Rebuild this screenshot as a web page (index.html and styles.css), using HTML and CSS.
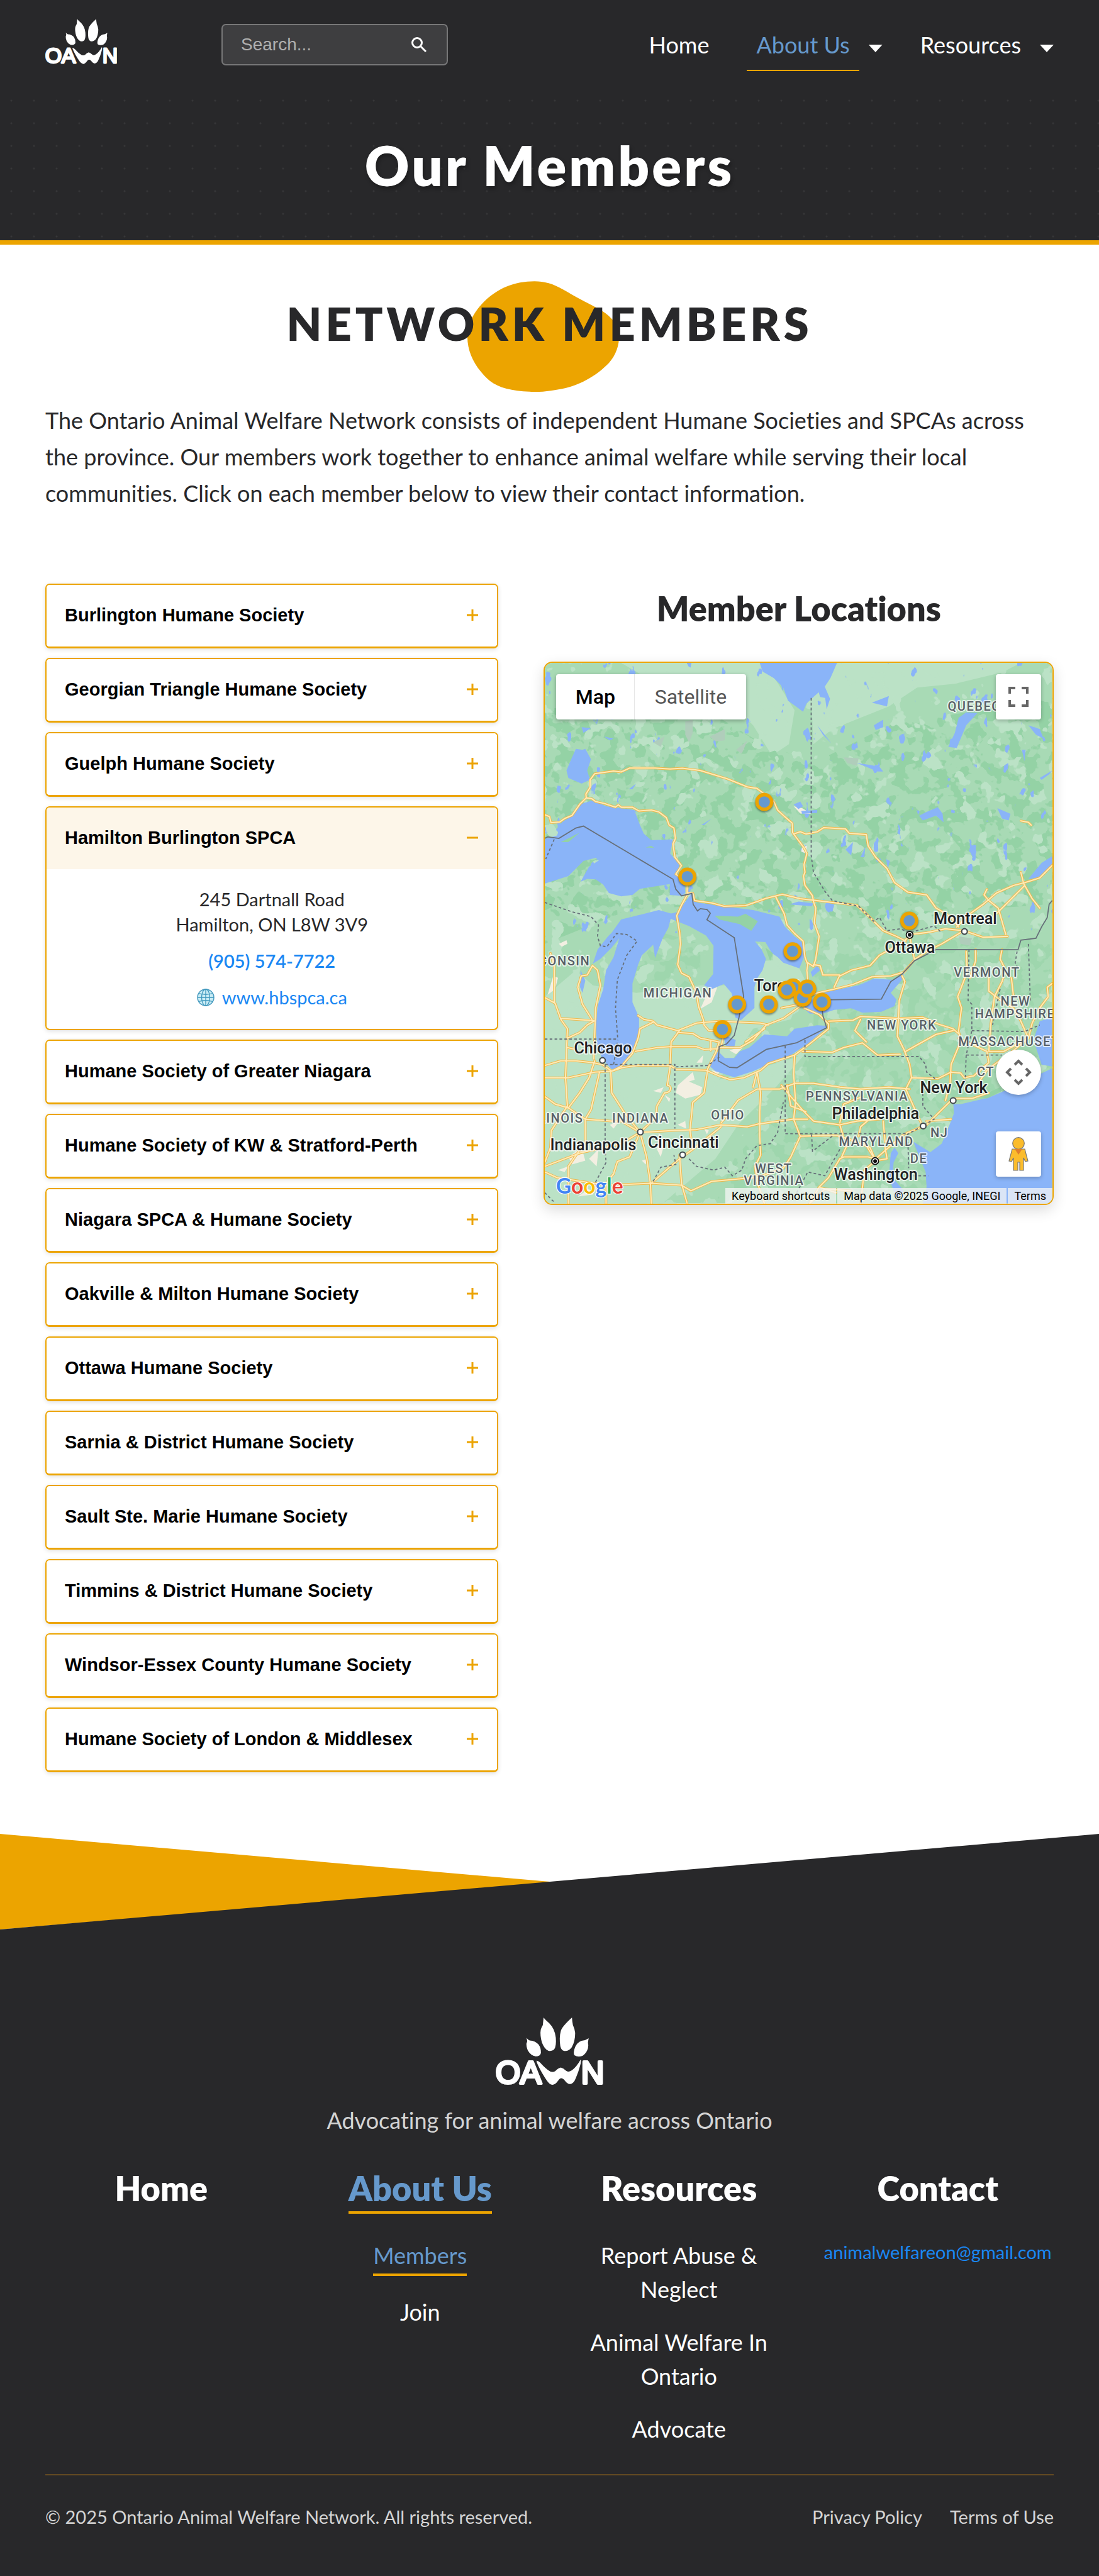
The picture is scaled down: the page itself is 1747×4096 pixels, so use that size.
FILE: index.html
```html
<!DOCTYPE html>
<html lang="en">
<head>
<meta charset="utf-8">
<meta name="viewport" content="width=device-width, initial-scale=1">
<title>Our Members | Ontario Animal Welfare Network</title>
<link rel="stylesheet" href="styles.css">
</head>
<body>
<svg class="sprite" aria-hidden="true">
  <symbol id="oawn" viewBox="36 28 571 358">
    <g fill="#fff">
      <path d="M290 28Q300 42 320 58Q350 88 355 135Q359 180 346 198Q334 209 316 205Q294 196 281 160Q270 120 275 92Q279 80 286 68Z"/>
      <path d="M441 28Q442 48 446 68Q456 88 458 110Q458 155 440 186Q424 208 401 206Q384 203 379 180Q372 135 382 98Q390 74 441 28Z"/>
      <path d="M199 136Q206 146 216 150Q245 151 263 171Q277 190 276 216Q272 235 248 235Q222 231 206 203Q197 180 199 165Q203 158 203 153Z"/>
      <path d="M530 138Q527 152 526 162Q530 175 526 192Q518 218 497 232Q472 241 454 229Q446 214 458 184Q470 160 492 152Q512 150 530 138Z"/>
      <path d="M253 257Q262 258 272 268Q300 300 325 315Q340 320 352 313Q368 297 382 294Q396 298 408 310Q420 322 440 309Q466 290 487 251Q491 264 484 285Q474 325 455 364Q443 382 430 382Q416 381 403 363Q393 351 384 351Q376 351 366 366Q351 386 337 386Q322 384 308 364Q272 312 253 265Z"/>
      <g class="logo-letters"><text x="35" y="379">O</text><text x="165" y="379">A</text><text x="490" y="379">N</text></g>
    </g>
  </symbol>
  <symbol id="plus" viewBox="0 0 18 18"><path d="M0 9H18M9 0V18" stroke="#eca400" stroke-width="3"/></symbol>
  <symbol id="minus" viewBox="0 0 18 18"><path d="M0 9H18" stroke="#eca400" stroke-width="3"/></symbol>
</svg>

<header class="site-header">
  <a class="logo-link" href="#" aria-label="OAWN home"><svg class="logo"><use href="#oawn"/></svg></a>
  <form class="search" role="search">
    <input type="search" aria-label="Search" placeholder="Search...">
    <button type="button" aria-label="Submit search">
      <svg width="24" height="24" viewBox="0 0 24 24" fill="none" stroke="#fff" stroke-width="3"><circle cx="9" cy="9" r="7.500"/><path d="M14.500 14.500L23 23"/></svg>
    </button>
  </form>
  <nav class="nav">
    <div class="nav-item"><a href="#">Home</a></div>
    <div class="nav-item"><a class="active" href="#">About Us</a><button class="caret" aria-label="Open About Us menu"></button></div>
    <div class="nav-item"><a href="#">Resources</a><button class="caret" aria-label="Open Resources menu"></button></div>
  </nav>
</header>

<section class="hero"><h1>Our Members</h1></section>

<main>
  <div class="title">
    <svg class="blob" viewBox="0 0 270 196" aria-hidden="true"><path fill="#eca400" d="M119 0C136 0 152 4 170 15C184 23 194 29 208 36C236 50 248 57 257 68C266 78 270 88 269 101C268 120 260 137 246 150C222 173 190 189 155 193C138 196 122 197 110 196C80 195 55 189 40 177C18 158 0 130 0 99C0 75 12 55 26 40C52 12 84 0 119 0Z"/></svg>
    <h2>Network Members</h2>
  </div>
  <p class="intro">The Ontario Animal Welfare Network consists of independent Humane Societies and SPCAs across the province. Our members work together to enhance animal welfare while serving their local communities. Click on each member below to view their contact information.</p>

  <div class="columns">
    <div class="members">
      <article class="member"><button>Burlington Humane Society<svg><use href="#plus"/></svg></button></article>
      <article class="member"><button>Georgian Triangle Humane Society<svg><use href="#plus"/></svg></button></article>
      <article class="member"><button>Guelph Humane Society<svg><use href="#plus"/></svg></button></article>
      <article class="member open">
        <button aria-expanded="true">Hamilton Burlington SPCA<svg><use href="#minus"/></svg></button>
        <div class="details">
          <address>245 Dartnall Road<br>Hamilton, ON L8W 3V9</address>
          <a class="phone" href="tel:9055747722">(905) 574-7722</a>
          <a class="site" href="#">
            <svg width="28" height="28" viewBox="0 0 28 28" fill="none"><circle cx="14" cy="14" r="13" fill="#c9ecf5" stroke="#4a9cc0" stroke-width="1.500"/><g stroke="#3f98bd" stroke-width="1.300"><ellipse cx="14" cy="14" rx="6.500" ry="13"/><path d="M14 1V27M1 14H27M3 7.500Q14 11 25 7.500M3 20.500Q14 17 25 20.500"/></g></svg>
            www.hbspca.ca</a>
        </div>
      </article>
      <article class="member"><button>Humane Society of Greater Niagara<svg><use href="#plus"/></svg></button></article>
      <article class="member"><button>Humane Society of KW &amp; Stratford-Perth<svg><use href="#plus"/></svg></button></article>
      <article class="member"><button>Niagara SPCA &amp; Humane Society<svg><use href="#plus"/></svg></button></article>
      <article class="member"><button>Oakville &amp; Milton Humane Society<svg><use href="#plus"/></svg></button></article>
      <article class="member"><button>Ottawa Humane Society<svg><use href="#plus"/></svg></button></article>
      <article class="member"><button>Sarnia &amp; District Humane Society<svg><use href="#plus"/></svg></button></article>
      <article class="member"><button>Sault Ste. Marie Humane Society<svg><use href="#plus"/></svg></button></article>
      <article class="member"><button>Timmins &amp; District Humane Society<svg><use href="#plus"/></svg></button></article>
      <article class="member"><button>Windsor-Essex County Humane Society<svg><use href="#plus"/></svg></button></article>
      <article class="member"><button>Humane Society of London &amp; Middlesex<svg><use href="#plus"/></svg></button></article>
    </div>

    <section class="locations">
      <h3>Member Locations</h3>
      <div class="map">
        <svg class="map-canvas" viewBox="75 69 2691 2868" role="img" aria-label="Map of member locations across Ontario">
          <defs>
            <filter id="forest" x="0" y="0" width="1" height="1" color-interpolation-filters="sRGB">
              <feTurbulence type="fractalNoise" baseFrequency=".013" numOctaves="3" seed="7"/>
              <feColorMatrix values="0 0 0 0 0  0 0 0 0 0  0 0 0 0 0  30 0 0 0 -15.400"/>
              <feComposite in="SourceGraphic" operator="in"/>
            </filter>
            <filter id="meadow" x="0" y="0" width="1" height="1" color-interpolation-filters="sRGB">
              <feTurbulence type="fractalNoise" baseFrequency=".011" numOctaves="3" seed="21"/>
              <feColorMatrix values="0 0 0 0 0  0 0 0 0 0  0 0 0 0 0  0 30 0 0 -18.500"/>
              <feComposite in="SourceGraphic" operator="in"/>
            </filter>
            <filter id="ponds" x="0" y="0" width="1" height="1" color-interpolation-filters="sRGB">
              <feTurbulence type="fractalNoise" baseFrequency=".016 .010" numOctaves="3" seed="3"/>
              <feColorMatrix values="0 0 0 0 0  0 0 0 0 0  0 0 0 0 0  0 0 30 0 -21.800"/>
              <feComposite in="SourceGraphic" operator="in"/>
            </filter>
            <g id="roads" fill="none" stroke-linejoin="round" stroke-linecap="round">
              <path d="M75 875L100 885L108 917L155 913L180 895L220 878L260 820L295 785L293 765L315 730L315 690L340 657L440 643L480 648L525 627L660 627L740 632L805 628L900 640L1040 683L1150 727L1200 735L1240 765L1290 805L1310 850L1350 887L1388 920L1390 970L1450 1050L1465 1080L1450 1140L1455 1180L1447 1200L1455 1250L1495 1305L1500 1335"/>
              <path d="M295 785L325 790L345 805L390 815L450 835L465 822L480 835L540 835L575 855L640 850L680 860L720 890L735 930L760 945L768 1000L755 1030L765 1100L800 1145L770 1190L790 1205L830 1210L830 1300L800 1355L775 1410L790 1500L795 1560L780 1670L800 1715L840 1735L880 1820L890 1890L915 1960L920 1990L945 2020L985 2020"/>
              <path d="M835 1290L860 1290L870 1330L960 1343L1025 1360L1140 1357L1250 1318L1335 1297L1430 1320L1500 1328L1600 1340L1730 1355L1775 1395L1815 1435L1870 1490L1940 1520L1990 1545"/>
              <path d="M1300 1310L1345 1400L1360 1460L1400 1505L1445 1545L1455 1630L1470 1670L1465 1700L1470 1750L1460 1850L1430 1890M1500 1335L1512 1370L1505 1450L1530 1520L1512 1640L1500 1680L1470 1660M1500 1670L1535 1675L1550 1725L1640 1725L1610 1790"/>
              <path d="M1400 975L1430 965L1460 977L1520 965L1555 943L1670 950L1690 973L1780 980L1790 1040L1830 1100L1890 1160L1930 1235L2000 1285L2100 1300L2150 1370L2220 1410L2270 1470"/>
              <path d="M2260 1470L2330 1400L2400 1350L2470 1290L2560 1250L2620 1235L2700 1210L2770 1140M2470 1400L2560 1310L2620 1250M2600 1180L2615 1240L2660 1320L2700 1370M2420 1270L2405 1300L2430 1330L2480 1370L2520 1510M2600 907L2640 915L2655 930"/>
              <path d="M1470 1840L1520 1820L1610 1800L1710 1775L1810 1735L1910 1730L1980 1710L2040 1640L2100 1600L2180 1560L2280 1500M2010 1520L1960 1560L1850 1620L1800 1675L1700 1700L1640 1730M2010 1520L2035 1640M2010 1510L2100 1500L2200 1480L2300 1490L2400 1525L2530 1520"/>
              <path d="M1430 1890L1340 1955L1250 1990L1180 2070L1110 2110L1000 2110M1450 1900L1530 1935L1580 1985M1330 1900L1430 1880M1240 2010L1140 2080M1020 2060L1010 2110"/>
              <path d="M75 1845L130 1875L160 1960L195 2010L185 2270L195 2420M105 1610L125 1680L125 1870M160 1955L335 1967M335 2170L345 1900L370 1780L355 1700L328 1675L300 1725L268 1730L250 1790L275 1880L325 1960M195 2060L260 2030L300 1990L335 1970M195 2110L240 2120"/>
              <path d="M75 2205L160 2180L240 2180L330 2190L380 2200L430 2235L490 2215L570 2205L740 2205L770 2225L930 2230L1000 2260L1060 2280L1130 2270L1220 2230L1260 2195L1400 2150L1480 2090L1580 2010L1580 1985M75 2270L200 2270L340 2240L430 2235L480 2210L540 2140L570 2060L580 2010L650 1975"/>
              <path d="M570 1940L600 1960L650 1970L670 1990L780 2020L880 1980L1000 1970L1110 1975L1220 1980L1260 1990M555 2130L670 2110L740 2105L880 2105L920 2120L1000 2115M780 2030L860 2035L900 2060L1000 2080L985 2130L940 2220L920 2350L860 2400L845 2550L860 2650M955 2070L955 2125"/>
              <path d="M425 2235L430 2350L500 2460L580 2560M740 2210L745 2080L790 2020M740 2210L725 2310C750 2310 750 2350 710 2350L670 2420L665 2480L580 2560M75 2370L130 2410L200 2430L290 2490L430 2500L480 2500L580 2560L760 2550L880 2545L1010 2520L1150 2530L1210 2515L1390 2490L1470 2490"/>
              <path d="M365 2240L345 2330L320 2440L290 2490L290 2610L200 2740L200 2937M580 2560L480 2620L260 2670L75 2740M195 2420L110 2550L105 2640L75 2720M200 2430L260 2350L310 2270L340 2180M75 2770L140 2800L400 2840L640 2830L800 2840L850 2870L960 2820L1180 2800M580 2560L525 2690L460 2715L440 2780L400 2830L400 2937M580 2560L615 2690L635 2830L640 2937"/>
              <path d="M790 2680L800 2830L830 2937M640 2830L720 2760L790 2700L860 2650L1010 2530M1010 2510L1100 2390L1200 2330L1320 2330L1400 2300L1500 2300L1640 2320L1750 2330L1900 2320L2010 2330M1200 2240L1180 2320M1200 2240L1220 2350L1215 2450L1215 2580L1220 2680L1190 2740L1200 2820L1240 2937"/>
              <path d="M1400 2150L1395 2250L1405 2400L1395 2490L1430 2580L1380 2690L1340 2750L1200 2800M1330 2310L1380 2370L1450 2450L1500 2500L1640 2520L1730 2500L1850 2490M1360 2310L1380 2420L1460 2450M1430 2580L1620 2575L1700 2600L1800 2640L1830 2710M1640 2520L1660 2590M1640 2510L1660 2410L1760 2370M1870 2500L1880 2610M1740 2580L1750 2530L1820 2470"/>
              <path d="M1580 1970L1710 1965L1750 1945L1950 1955L2080 1950L2160 1985L2240 2010L2275 2040M1970 1730L1985 1760L1955 1860L1950 1960L1945 2050L1980 2120L2010 2200L2020 2270L1990 2330L2030 2420L2080 2530M2310 1600L2315 1710L2265 1840L2285 1900L2270 2020L2280 2080L2230 2200L2225 2300L2200 2390M2360 1590L2360 1650L2330 1740"/>
              <path d="M1990 2130L2060 2090L2150 2040L2240 2020M1440 2130L1600 2135L1660 2110L1760 2085L1840 2150L1960 2145M1780 2080L1720 2020L1750 1960M2020 2270L2160 2275L2230 2240L2280 2245L2300 2270L2350 2260L2430 2190L2420 2130L2270 2060M2430 2130L2510 2130L2640 2060M2500 1590L2490 1640L2520 1700L2500 1760L2460 1840L2440 1990L2430 2130"/>
              <path d="M2430 1740L2430 1810L2480 1850L2560 1900L2600 1970L2640 2060M2550 1740L2560 1830M2766 1770L2740 1790L2745 1840L2700 1900L2660 1980L2640 2060L2580 2110L2420 2230L2380 2290M2230 2390L2160 2460L2100 2520L1980 2570L1830 2700L1790 2690L1660 2690L1640 2700M2240 2380L2340 2380L2430 2350M2100 2500L2230 2490"/>
              <path d="M1830 2710L1780 2630M1830 2710L1770 2760L1750 2937M1640 2700L1580 2800L1530 2850L1480 2937M1690 2600L1650 2690M1880 2640L1890 2700L1830 2710M1530 2850L1620 2880M1480 2937L1560 2860L1700 2870"/>
            </g>
          </defs>

          <rect x="75" y="69" width="2691" height="2868" fill="#a8dab5"/>
          <path fill="#bbe2c6" d="M480 69H1215L1300 160L1400 320L1370 500L1280 560L1180 400L1080 300L950 200L800 150L600 140ZM1480 69H2600L2500 120L2250 180L2050 200L1900 300L1600 420L1500 500Z"/>
          <path fill="#bbe2c6" d="M75 1840L240 1700L330 1780L560 1820L900 1780L1100 1780L1240 1650L1400 1640L1460 1760L1380 1960L1180 2010L1000 2280L1450 2150L1300 2320L1100 2520L980 2700L700 2937H75Z"/>
          <path fill="#94d2a5" filter="url(#forest)" d="M75 320L700 200L900 300L1200 480L1500 600L1900 400L2500 300L2766 250V1350L2300 1380L2000 1440L1700 1420L1340 1400L1000 1350L520 1380L75 1560Z"/>
          <path fill="#94d2a5" opacity=".45" filter="url(#forest)" d="M560 1680L700 1500L900 1560L900 1760L760 1830L560 1800ZM1500 1500H2766V2500L1900 2937H980L1080 2700L1340 2400L1500 2100Z"/>
          <path fill="#bbe2c6" filter="url(#meadow)" d="M75 69H2766V2937H75Z"/>
          <path fill="#8ab4f8" filter="url(#ponds)" d="M75 69H2766V1500H75Z"/>
          <g fill="#b0cdbb"><path d="M820 380L860 370L860 440L840 490L820 450ZM950 460L1030 420L1030 480L980 485ZM1090 530L1150 480L1120 550ZM650 490L710 460L690 515ZM1660 570L1740 575L1730 615L1680 600ZM2270 1520L2340 1530L2330 1570L2280 1560Z"/></g>
          <g fill="#f3efe2">
            <path d="M150 1560L190 1540L195 1560L165 1575ZM120 1730L145 1740L130 1800L90 1830ZM960 1800L990 1790L960 1870L900 1905L925 1850ZM650 2340L705 2320L690 2350ZM780 2310L860 2240L870 2280L840 2290L910 2320L900 2360L820 2380L770 2350ZM880 2190L915 2150L910 2190ZM960 2230L1000 2240L990 2260ZM710 2360L740 2380L735 2400ZM1055 2125L1140 2095L1090 2145Z"/>
            <path d="M200 2690L270 2640L290 2710L220 2730ZM310 2700L360 2650L350 2740ZM590 2710L620 2700L610 2730ZM680 2560L710 2620L690 2690L670 2650ZM780 2520L820 2500L825 2540ZM920 2540L945 2550L935 2570ZM250 2900L310 2860L330 2890ZM420 2520L470 2500L440 2540ZM145 2760L200 2740L180 2770ZM1440 1045L1465 1040L1460 1080L1435 1070ZM1395 830L1440 840L1490 870L1430 868Z"/>
          </g>
          <g fill="#8ab4f8">
            <path d="M75 1003L140 985L165 915L220 880L260 820L330 798L400 830L550 850L580 930L600 975L640 1010L755 1005L740 1080L790 1140L775 1190L815 1220L820 1290L800 1305L738 1300L738 1243L580 1268L540 1300L480 1308L415 1290L385 1245L345 1218L300 1215L265 1230L310 1150L362 1117L345 1103L280 1120L200 1200L75 1240Z"/>
            <path d="M240 525L275 530L290 525L320 580L300 640L315 690L270 710L200 680L190 640L215 580Z"/>
            <path d="M1215 69L1230 115L1290 150L1340 200L1365 270L1400 295L1445 328L1463 285L1500 250L1528 225L1535 250L1562 255L1570 315L1588 260L1560 195L1590 150L1625 69Z"/>
            <path d="M430 1500L480 1430L570 1408L680 1380L750 1400L730 1475L700 1530L660 1635L650 1565L590 1620L570 1670L540 1770L540 1870L575 1950L575 2030L550 2100L530 2160L490 2215L430 2225L380 2170L355 2110L345 2010L355 1890L385 1800L400 1700L440 1630L470 1530L430 1580L370 1640L330 1665L355 1590L410 1520Z"/>
            <path d="M700 1410L780 1390L855 1290L880 1340L1020 1360L1180 1380L1320 1415L1350 1470L1400 1520L1445 1555L1450 1630L1425 1690L1340 1660L1310 1630L1280 1610L1245 1550L1190 1547L1225 1590L1248 1640L1230 1700L1200 1745L1187 1790L1187 1900L1115 1965L1085 1950L1080 1870L1065 1820L1025 1773L960 1800L920 1780L968 1720L970 1570L930 1515L840 1465Z"/>
            <path d="M1020 2040L1088 2070L1080 2110L1035 2100ZM995 2130L1030 2165L1080 2165L1110 2130L1160 2110L1240 2040L1360 2050L1400 2010L1520 1992L1580 1995L1470 2090L1380 2150L1280 2190L1180 2235L1080 2268L980 2235L940 2200Z"/>
            <path d="M1470 1870L1520 1830L1610 1805L1740 1780L1820 1745L1920 1750L1980 1720L1970 1750L1910 1820L1940 1855L1930 1890L1860 1920L1760 1925L1700 1902L1610 1910L1550 1930L1480 1930L1445 1900ZM1485 1710L1520 1675L1535 1700L1495 1735ZM1373 1350L1420 1335L1500 1345L1490 1360Z"/>
            <path d="M2242 2410L2280 2410L2430 2375L2500 2345L2766 2220V2937H2080L2100 2850L2095 2770L2070 2710L2030 2610L2120 2665L2180 2620L2210 2550L2245 2460ZM2700 1970L2766 1950V2210L2710 2200L2680 2110L2670 2060ZM1930 2640L1950 2670L1925 2720L1920 2800L1980 2870L1940 2910L1900 2800L1910 2670Z"/>
            <path d="M2766 1095L2710 1130L2640 1215L2690 1210L2766 1140ZM2475 840L2545 870L2535 905L2500 895ZM2060 880L2100 860L2160 835L2185 870L2190 915L2150 880L2080 905ZM2215 515L2250 440L2270 360L2310 332L2370 335L2310 400L2260 520ZM1395 820L1430 805L1445 830L1420 845ZM1435 855L1520 850L1520 865L1440 870Z"/>
            <path d="M1820 400L1870 370L1870 410L1830 425ZM1730 600L1800 610L1850 620L1870 645L1840 645L1780 620ZM1520 400L1595 495L1550 450ZM1810 280L1900 245L1890 300ZM2640 400L2700 420L2720 470L2680 450ZM2700 680L2766 640L2750 660L2710 690ZM2605 530L2625 530L2620 590ZM265 1700L290 1755L275 1820L262 1790ZM520 740L560 710L540 740ZM905 930L960 895L920 930ZM390 460L440 470L420 480ZM270 410L320 415L280 440ZM1670 1060L1710 1020L1700 1090ZM1750 1100L1775 1045L1770 1100ZM1885 1110L1905 1120L1895 1160Z"/>
          </g>
          <g fill="#94d2a5"><path d="M975 1410L1100 1415L1140 1400L1205 1440L1170 1490L1110 1455L1000 1430ZM160 1020L260 970L200 1020ZM610 1048L640 1040L655 1050ZM1245 1580L1285 1610L1270 1650ZM2380 2370L2490 2320L2500 2340L2420 2380Z"/></g>
          <use href="#roads" stroke="#edb84c" stroke-width="13"/>
          <use href="#roads" stroke="#ffeab5" stroke-width="7"/>
          <path class="border" d="M75 1000L90 992L150 1000L240 945L280 935L755 1217L770 1270L800 1305L855 1292L862 1350L885 1385L900 1373L935 1377L953 1397L935 1432L1080 1527L1130 1840L1105 1950L1080 2045L1040 2090L1000 2105L995 2180L1055 2215L1095 2217L1250 2120L1410 2085L1570 2005L1550 1940L1545 1900L1545 1857L1860 1853L1910 1760L1970 1720L2035 1650L2150 1590L2585 1591L2600 1540L2680 1530L2710 1470L2740 1420L2750 1350L2766 1330"/>
          <path class="border dashed" d="M1488 255V1090L1500 1180L1560 1280L1600 1330L1740 1360L1820 1440L1850 1420L1890 1490L1960 1480L2010 1500L2140 1465L2180 1500M75 1340L220 1390L320 1415L360 1460L355 1520L370 1570L405 1575L455 1505L510 1510L565 1545L510 1620L460 1750L450 1900L462 2065M75 2065H462M440 2200L462 2070M395 2200V2650L400 2720L330 2850M395 2200H765V2540M770 2212L940 2205L1000 2160M1350 2100V2567H2000M1455 2070V2157H2060L2095 2200L2100 2240L2145 2275"/>
          <path class="border dashed" d="M650 2820L690 2745L770 2730L760 2680M840 2700L880 2740L970 2760L1030 2745L1070 2790L1120 2760L1140 2700L1200 2630L1270 2620L1310 2560L1340 2400M2325 1590L2320 1860L2340 1880V2020L2310 2150L2305 2290M2340 2020L2620 2025L2700 1990M2640 1560L2650 1860M2310 2150H2500M2080 2300V2420L2140 2490L2000 2570L2005 2750M2005 2790H2110M1490 2570L1495 2660L1600 2580M1640 2650L1560 2790L1470 2770L1400 2900M125 1005L80 1110M2580 1600L2570 1660L2590 1700M2490 1800L2450 1990M75 2880L125 2930"/>
          <g class="states">
            <text x="316" y="1673" text-anchor="end">WISCONSIN</text><text x="598" y="1845">MICHIGAN</text>
            <text x="280" y="2508" text-anchor="end">ILLINOIS</text><text x="432" y="2508">INDIANA</text>
            <text x="957" y="2490">OHIO</text><text x="1190" y="2775">WEST</text><text x="1130" y="2840">VIRGINIA</text>
            <text x="1460" y="2390">PENNSYLVANIA</text><text x="2245" y="1733">VERMONT</text><text x="2492" y="1889">NEW</text>
            <text x="2356" y="1955">HAMPSHIRE</text><text x="1783" y="2015">NEW YORK</text><text x="2268" y="2102">MASSACHUSETTS</text>
            <text x="2367" y="2260">CT</text><text x="2120" y="2585">NJ</text><text x="1635" y="2630">MARYLAND</text>
            <text x="2013" y="2720">DE</text><text x="2212" y="322">QUEBEC</text>
          </g>
          <g class="cities">
            <text x="1185" y="1810">Toronto</text><text x="230" y="2140">Chicago</text><text x="103" y="2655">Indianapolis</text>
            <text x="622" y="2642">Cincinnati</text><text x="1878" y="1608">Ottawa</text><text x="2137" y="1455">Montreal</text>
            <text x="2065" y="2352">New York</text><text x="1598" y="2489">Philadelphia</text><text x="1608" y="2810">Washington</text>
          </g>
          <g fill="#fff" stroke="#444b50" stroke-width="7"><circle cx="381" cy="2178" r="15"/><circle cx="582" cy="2558" r="15"/><circle cx="806" cy="2679" r="15"/><circle cx="2301" cy="1494" r="15"/><circle cx="2241" cy="2391" r="15"/><circle cx="2082" cy="2526" r="15"/></g>
          <g fill="#111" stroke="#111" stroke-width="6"><circle cx="2010" cy="1512" r="18" fill="#fff"/><circle cx="2010" cy="1512" r="7"/><circle cx="1827" cy="2712" r="18" fill="#fff"/><circle cx="1827" cy="2712" r="7"/></g>
          <g class="pins">
            <circle cx="1239" cy="807" r="39"/><circle cx="831" cy="1203" r="39"/><circle cx="2008" cy="1437" r="39"/><circle cx="1389" cy="1599" r="39"/>
            <circle cx="1095" cy="1881" r="39"/><circle cx="1263" cy="1881" r="39"/><circle cx="1017" cy="2013" r="39"/><circle cx="1392" cy="1791" r="39"/>
            <circle cx="1443" cy="1845" r="39"/><circle cx="1359" cy="1804" r="39"/><circle cx="1467" cy="1797" r="39"/><circle cx="1545" cy="1868" r="39"/>
          </g>
          <text class="google" x="134" y="2886"><tspan fill="#4285f4">G</tspan><tspan fill="#ea4335">o</tspan><tspan fill="#fbbc04">o</tspan><tspan fill="#4285f4">g</tspan><tspan fill="#34a853">l</tspan><tspan fill="#ea4335">e</tspan></text>
        </svg>
        <div class="map-type"><button class="current">Map</button><button>Satellite</button></div>
        <button class="map-btn fullscreen" aria-label="Toggle fullscreen view"><svg width="32" height="32" viewBox="0 0 32 32" fill="none" stroke="#666" stroke-width="4"><path d="M2 11V2H11M21 2H30V11M30 21V30H21M11 30H2V21"/></svg></button>
        <button class="map-btn pan" aria-label="Map camera controls"><svg width="42" height="42" viewBox="0 0 42 42" fill="none" stroke="#666" stroke-width="4"><path d="M15 9L21 3L27 9M15 33L21 39L27 33M9 15L3 21L9 27M33 15L39 21L33 27"/></svg></button>
        <button class="map-btn pegman" aria-label="Street View"><svg width="32" height="54" viewBox="0 0 32 54"><g fill="#fbbc2c" stroke="#777" stroke-width="1.200"><path d="M6 19L26 19L31 38L27 39L24 33V53H18V40H15V53H8V33L5 39L1 38Z"/><circle cx="16" cy="10" r="9.300"/></g><path fill="#e07f2d" d="M10 19H22L16 28Z"/></svg></button>
        <div class="map-legal"><button>Keyboard shortcuts</button><span>Map data ©2025 Google, INEGI</span><a href="#">Terms</a></div>
      </div>
    </section>
  </div>
</main>

<svg class="slant" viewBox="0 0 100 100" preserveAspectRatio="none" aria-hidden="true"><path fill="#eca400" d="M0 0L51 51L0 100Z"/><path fill="#28282a" d="M0 100L100 0V101H0Z"/></svg>
<footer class="site-footer">
  <svg class="footer-logo" role="img" aria-label="OAWN"><use href="#oawn"/></svg>
  <p class="tagline">Advocating for animal welfare across Ontario</p>
  <div class="footer-cols">
    <section><h4><a href="#">Home</a></h4></section>
    <section><h4><a class="active" href="#">About Us</a></h4><ul><li><a class="active" href="#">Members</a></li><li><a href="#">Join</a></li></ul></section>
    <section><h4><a href="#">Resources</a></h4><ul class="narrow"><li><a href="#">Report Abuse &amp; Neglect</a></li><li><a href="#">Animal Welfare In Ontario</a></li><li><a href="#">Advocate</a></li></ul></section>
    <section><h4>Contact</h4><a class="email" href="mailto:animalwelfareon@gmail.com">animalwelfareon@gmail.com</a></section>
  </div>
  <div class="legal"><span>© 2025 Ontario Animal Welfare Network. All rights reserved.</span><div class="legal-links"><a href="#">Privacy Policy</a><a href="#">Terms of Use</a></div></div>
</footer>
</body>
</html>
```
FILE: styles.css
```css
:root {
  --dark: #28282a;
  --gold: #eca400;
  --blue: #6699cc;
  --link: #1a87f3;
}
* { box-sizing: border-box; }
body { margin: 0; background: #fff; color: var(--dark); font: 400 36px/58px Lato, sans-serif; font-variant-ligatures: none; }
h1, h2, h3, h4, p, ul { margin: 0; padding: 0; font-weight: 800; }
p, ul { font-weight: 400; }
a { color: inherit; text-decoration: none; }
button { font: inherit; border: 0; padding: 0; background: none; cursor: pointer; }
.sprite { display: none; }
.logo-letters { font: 400 170px "Liberation Sans", sans-serif; fill: #fff; stroke: #fff; stroke-width: 14px; stroke-linejoin: round; }

.site-header { display: flex; align-items: center; height: 142px; padding: 0 72px; background: var(--dark); color: #fff; }
.logo-link { display: flex; padding-bottom: 11px; }
.logo { width: 114px; height: 72px; }
.search { display: flex; align-items: center; width: 360px; height: 66px; margin-left: 166px; padding: 0 32px 0 29px; border: 2px solid #777778; border-radius: 7px; background: #3e3e40; }
.search input { flex: 1; min-width: 0; padding: 0; border: 0; outline: 0; background: none; color: #fff; font: 400 28px/40px "Liberation Sans", sans-serif; }
.search input::placeholder { color: #b0b0b0; opacity: 1; }
.search button { display: flex; }
.nav { display: flex; gap: 45px; margin-left: auto; }
.nav-item { display: flex; align-items: center; gap: 15px; }
.nav-item a { padding: 13px 15px 11px; border-bottom: 2px solid transparent; }
.nav-item a.active { color: var(--blue); border-color: var(--gold); }
.caret { width: 22px; height: 12px; margin-top: 12px; background: #fff; clip-path: polygon(0 0, 100% 0, 50% 100%); }

.hero { padding: 69px 72px 67px; border-bottom: 7px solid var(--gold); background: radial-gradient(circle at center, #363638 1px, transparent 2px) 0 0 / 36px 36px var(--dark); color: #fff; text-align: center; }
.hero h1 { font-size: 87px; line-height: 104px; letter-spacing: 4px; text-shadow: 2px 4px 6px rgba(0, 0, 0, .3); }

main { padding: 58px 72px 98px; }
.title { position: relative; display: grid; justify-items: center; height: 176px; text-align: center; }
.title h2 { position: relative; padding-top: 24px; font-size: 72px; line-height: 86px; letter-spacing: 6px; text-transform: uppercase; }
.blob { position: absolute; top: 0; left: calc(50% - 131px); width: 242px; height: 176px; }
.intro { margin: 16px 0 115px; }
.columns { display: grid; grid-template-columns: 8fr 9fr; gap: 72px; align-items: start; }

.members { display: grid; gap: 15px; }
.member { border: 2px solid var(--gold); border-bottom-width: 3px; border-radius: 7px; box-shadow: 0 2px 7px rgba(0, 0, 0, .12); overflow: hidden; }
.member > button { display: flex; align-items: center; justify-content: space-between; width: 100%; height: 98px; padding: 0 30px 2px 29px; background: #fff; color: #000; font: 700 29px/40px "Liberation Sans", sans-serif; text-align: left; }
.member svg { flex: none; }
.member > button svg { width: 18px; height: 18px; }
.member.open { border-bottom-width: 2px; }
.member.open > button { background: #fdf6e9; }
.details { display: grid; justify-items: center; gap: 18px; padding: 28px 28px 30px; font-size: 29px; line-height: 40px; text-align: center; }
.details address { font-style: normal; }
.details a { color: var(--link); }
.phone { font-weight: 600; }
.site { display: flex; align-items: center; gap: 12px; }

.locations h3 { padding: 8px 0 52px; font-size: 54px; line-height: 64px; text-align: center; }
.map { position: relative; border: 2px solid var(--gold); border-radius: 14px; overflow: hidden; box-shadow: 0 8px 22px rgba(0, 0, 0, .14); font-family: Roboto, sans-serif; }
.map-canvas { display: block; width: 100%; }
.border { fill: none; stroke: #67707a; stroke-width: 6px; }
.dashed { stroke-dasharray: 14 12; }
.states, .cities { font-family: Roboto, sans-serif; font-weight: 500; paint-order: stroke; stroke: rgba(255, 255, 255, .75); stroke-width: 12px; stroke-linejoin: round; }
.states { font-size: 67px; fill: #575e65; letter-spacing: 5px; }
.cities { font-size: 84px; fill: #202124; }
.pins { fill: var(--blue); stroke: var(--gold); stroke-width: 18px; filter: drop-shadow(0 6px 6px rgba(0, 0, 0, .45)); }
.google { font: 700 112px Lato, sans-serif; paint-order: stroke; stroke: #fff; stroke-width: 8px; }
.map-type { position: absolute; top: 18px; left: 18px; display: flex; border-radius: 4px; overflow: hidden; background: #fff; box-shadow: 0 2px 6px rgba(0, 0, 0, .3); }
.map-type button { width: 177px; height: 72px; color: #565656; font-size: 32px; line-height: 40px; }
.map-type .current { width: 125px; border-right: 1px solid #e6e6e6; color: #000; font-weight: 500; }
.map-btn { position: absolute; right: 18px; display: grid; place-items: center; width: 72px; height: 72px; border-radius: 4px; background: #fff; box-shadow: 0 2px 6px rgba(0, 0, 0, .25); }
.fullscreen { top: 18px; }
.pan { bottom: 173px; border-radius: 50%; }
.pegman { bottom: 43px; }
.map-legal { position: absolute; right: 0; bottom: 0; display: flex; gap: 2px; color: #000; font-size: 18px; line-height: 25px; }
.map-legal > * { padding: 0 10px; background: rgba(245, 245, 245, .75); }

.slant { display: block; width: 100%; height: 152px; }
.site-footer { display: grid; justify-items: center; padding: 140px 72px 73px; background: var(--dark); color: #fff; }
.footer-logo { width: 171px; height: 107px; }
.tagline { margin-top: 27px; color: #d4d4d4; }
.footer-cols { display: grid; grid-template-columns: repeat(4, 1fr); gap: 43px; justify-self: stretch; margin-top: 48px; text-align: center; }
.footer-cols h4 { height: 76px; margin-bottom: 35px; font-size: 54px; line-height: 64px; }
.footer-cols h4 a { display: inline-block; padding-bottom: 4px; }
.footer-cols .active { color: var(--blue); border-bottom: 4px solid var(--gold); }
.footer-cols ul { display: grid; gap: 30px; list-style: none; line-height: 54px; }
.footer-cols li .active { display: inline-block; padding-bottom: 2px; }
.narrow { padding: 0 40px; }
.email { display: block; color: var(--link); font-size: 29px; line-height: 44px; white-space: nowrap; }
.legal { display: flex; justify-content: space-between; justify-self: stretch; margin-top: 45px; padding-top: 44px; border-top: 2px solid #634a22; color: #d4d4d4; font-size: 29px; line-height: 44px; }
.legal-links { display: flex; gap: 44px; }
```
